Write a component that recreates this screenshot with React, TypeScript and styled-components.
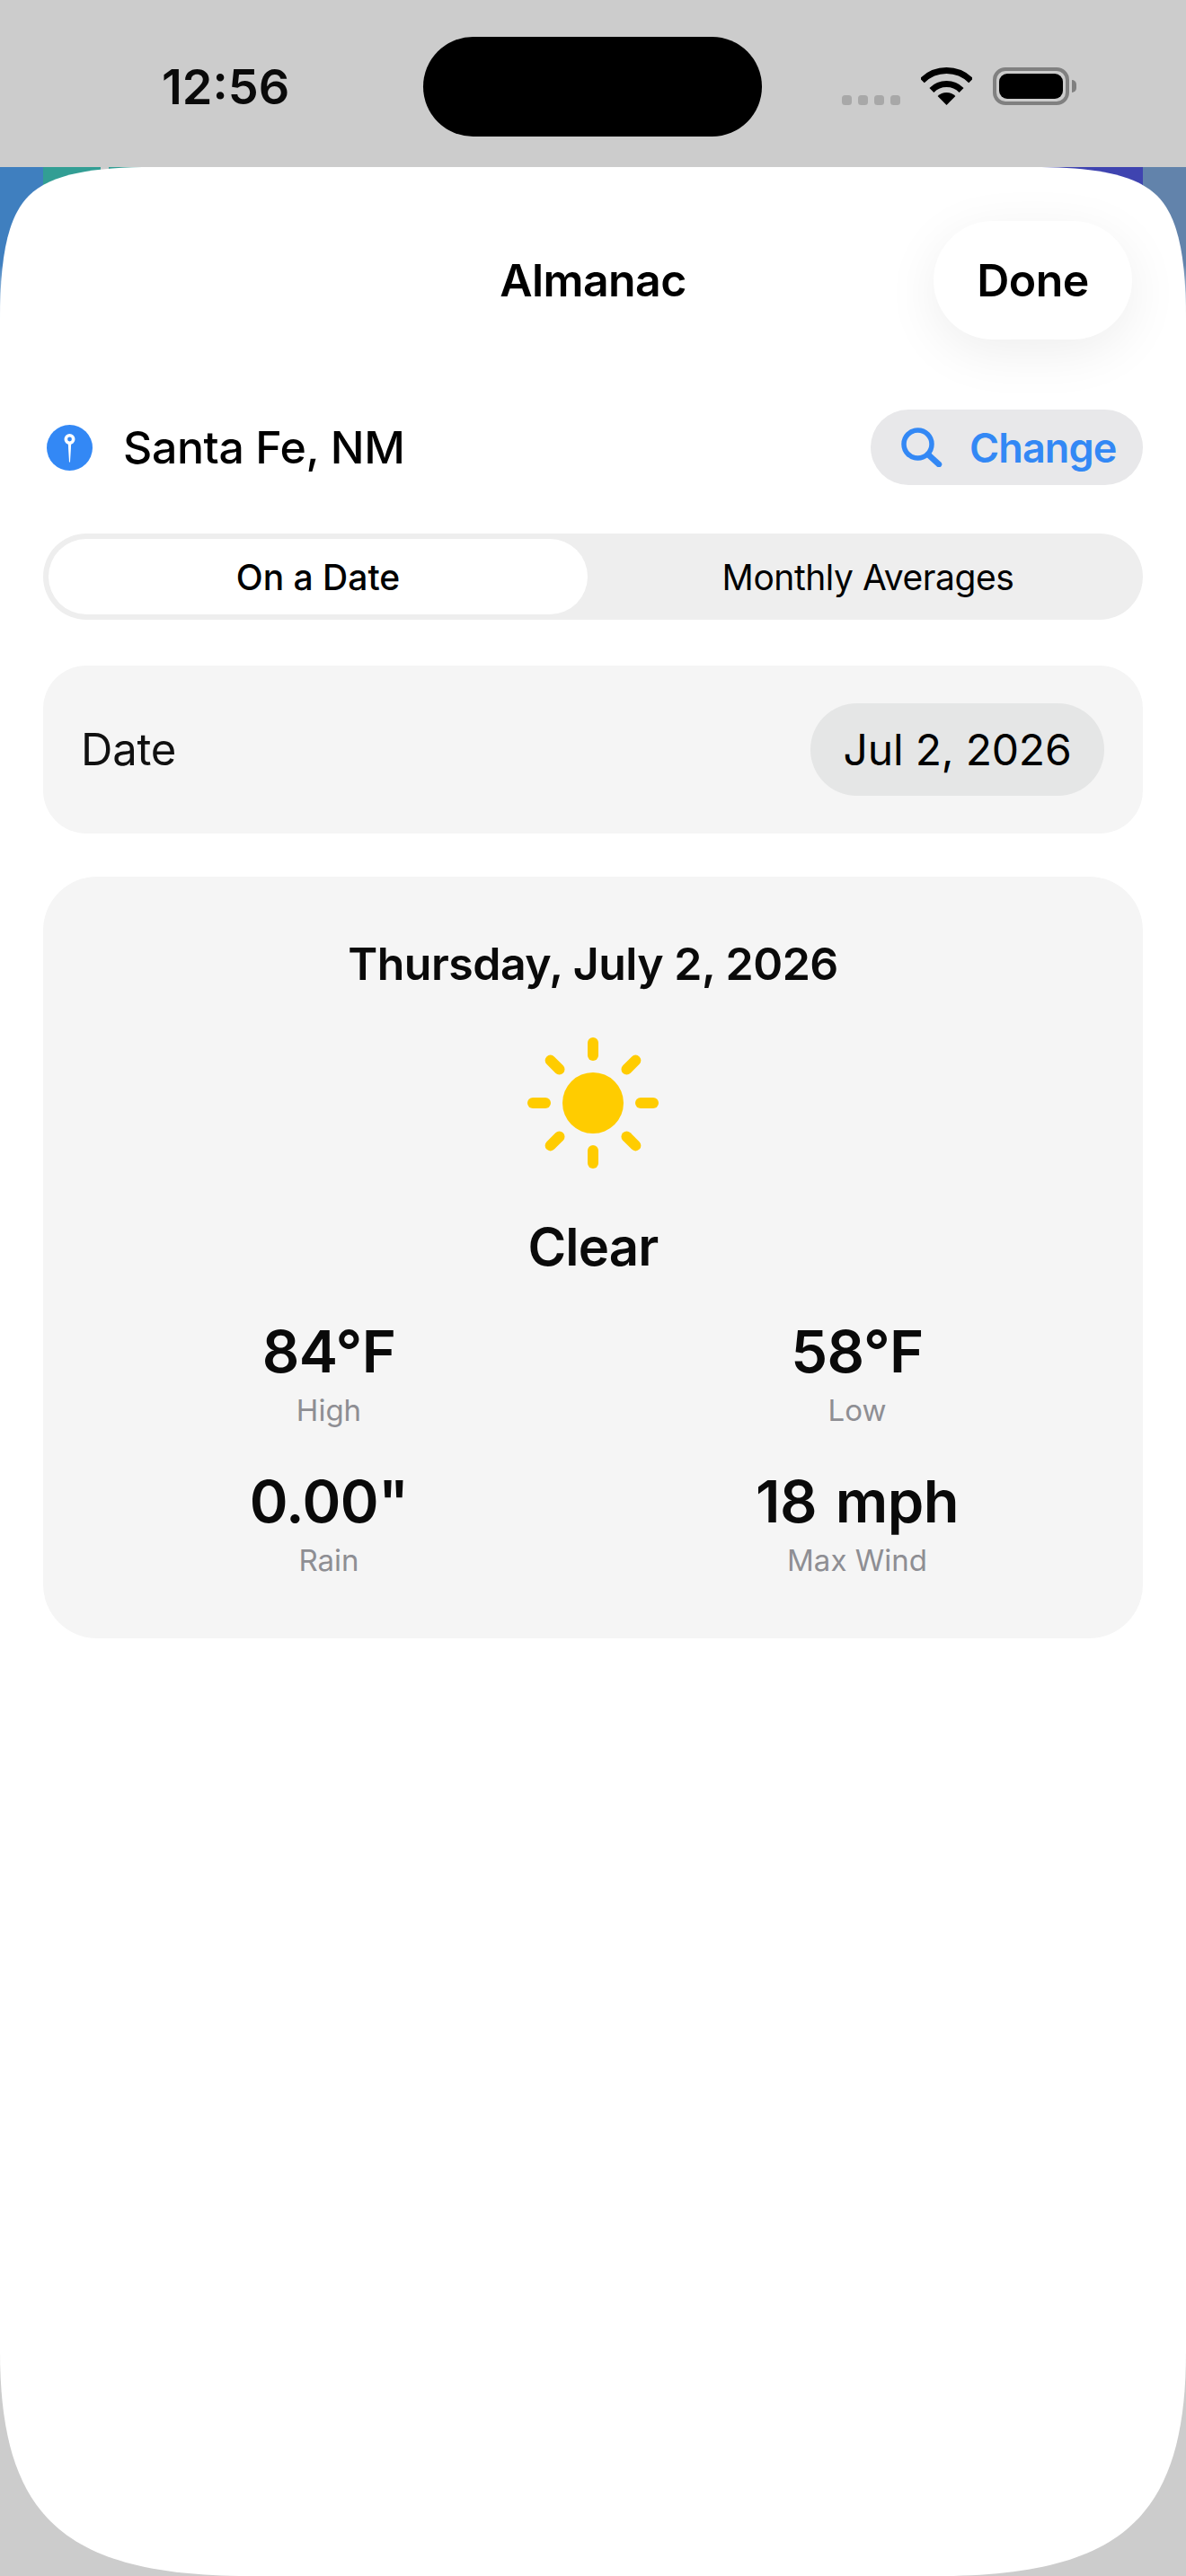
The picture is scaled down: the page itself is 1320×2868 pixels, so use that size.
import React from "react"
import styled, { createGlobalStyle } from "styled-components"

const GlobalStyle = createGlobalStyle`
html, body {
    margin: 0;
    padding: 0;
    background: #cccccc;
}
* {
    box-sizing: border-box;
}
`

const Screen = styled.div`
width: 1320px;
height: 2868px;
overflow: hidden;
display: flex;
flex-direction: column;
font-family: "Inter", "Liberation Sans", sans-serif;
color: #000;
background-color: #ccc;
background-image:
    linear-gradient(#3f7fbf 60%, #fff),
    linear-gradient(#329e94, #329e94),
    linear-gradient(#329e94, #329e94),
    linear-gradient(#3f44b0, #3f44b0),
    linear-gradient(#6283ab 60%, #fff);
background-repeat: no-repeat;
background-size: 48px 180px, 64px 60px, 60px 60px, 120px 60px, 48px 180px;
background-position: 0 186px, 48px 186px, 121px 186px, 1152px 186px, 1272px 186px;
`

const StatusBar = styled.div`
height: 186px;
flex: none;
display: grid;
grid-template-columns: 471px 377px 1fr;
padding-top: 41px;
`

const Clock = styled.div`
height: 111px;
padding-left: 180px;
display: flex;
align-items: center;
font-size: 54px;
font-weight: 600;
letter-spacing: 0;
color: #0a0a0a;
`

const Island = styled.div`
height: 111px;
background: #000;
border-radius: 56px;
`

const StatusIcons = styled.div`
display: flex;
align-items: flex-start;
padding: 34px 0 0 89px;
`

const SignalDots = styled.div`
display: flex;
gap: 7px;
margin-top: 31px;
`

const SignalDot = styled.span`
width: 11px;
height: 11px;
border-radius: 3.5px;
background: #a8a8a8;
`

const WifiIcon = styled.svg`
width: 57px;
height: 42px;
margin-left: 23px;
`

const Battery = styled.div`
position: relative;
width: 85px;
height: 42px;
margin-left: 23px;
border: 4px solid #808080;
border-radius: 14px;
padding: 3px;
&::after {
    content: "";
    position: absolute;
    right: -12px;
    top: 10px;
    width: 5px;
    height: 14px;
    border-radius: 0 5px 5px 0;
    background: #808080;
}
`

const BatteryFill = styled.div`
width: 100%;
height: 100%;
border-radius: 9px;
background: #000;
`

// continuous corners, a plain border-radius can't do these
const Sheet = styled.main`
flex: 1;
display: flex;
flex-direction: column;
padding: 60px 48px 0;
background: #fff;
clip-path: path("M0 171C0 105 7 57 32 32C57 7 105 0 171 0H1149C1215 0 1263 7 1288 32C1313 57 1320 105 1320 171V2432C1320 2620 1245 2682 1040 2682H280C75 2682 0 2620 0 2432Z");
`

const Header = styled.header`
display: grid;
grid-template-columns: 1fr auto 1fr;
align-items: center;
margin: 0 12px;
`

const Title = styled.h1`
grid-column: 2;
margin: 0;
font-size: 50px;
font-weight: 600;
letter-spacing: -0.6px;
`

const DoneButton = styled.button`
justify-self: end;
width: 221px;
height: 132px;
border: 0;
border-radius: 66px;
background: #fff;
box-shadow: 0 14px 60px rgba(0, 0, 0, 0.07);
font-family: inherit;
font-size: 50px;
font-weight: 600;
letter-spacing: -0.6px;
color: #000;
`

const LocationRow = styled.section`
display: flex;
align-items: center;
justify-content: space-between;
height: 84px;
margin-top: 78px;
`

const Place = styled.div`
display: flex;
align-items: center;
gap: 34px;
padding-left: 4px;
font-size: 50px;
font-weight: 550;
letter-spacing: -0.4px;
`

const PinBadge = styled.svg`
width: 51px;
height: 51px;
`

const ChangeButton = styled.button`
display: flex;
align-items: center;
gap: 30px;
width: 303px;
height: 84px;
padding: 0 0 0 34px;
border: 0;
border-radius: 42px;
background: #e8e8ea;
font-family: inherit;
font-size: 45px;
font-weight: 600;
letter-spacing: -0.9px;
color: #3388f5;
`

const SearchIcon = styled.svg`
width: 46px;
height: 44px;
flex: none;
`

const Segments = styled.div`
display: grid;
grid-template-columns: 1fr 1fr;
column-gap: 12px;
height: 96px;
margin-top: 54px;
padding: 6px;
border-radius: 48px;
background: #eeeeee;
`

const Segment = styled.div<{ $active?: boolean }>`
display: flex;
align-items: center;
justify-content: center;
border-radius: 42px;
font-size: 39px;
font-weight: ${(p) => (p.$active ? 500 : 400)};
letter-spacing: ${(p) => (p.$active ? "0" : "-0.45px")};
background: ${(p) => (p.$active ? "#fff" : "transparent")};
`

const DateCard = styled.section`
display: flex;
align-items: center;
justify-content: space-between;
height: 187px;
margin-top: 51px;
padding: 0 43px 0 42px;
border-radius: 48px;
background: #f5f5f5;
`

const DateLabel = styled.span`
font-size: 49px;
letter-spacing: -0.2px;
color: #111;
`

const DatePill = styled.div`
display: flex;
align-items: center;
justify-content: center;
width: 327px;
height: 103px;
border-radius: 52px;
background: #e5e6e6;
font-size: 48px;
letter-spacing: -0.2px;
color: #000;
`

const ResultCard = styled.section`
display: flex;
flex-direction: column;
align-items: center;
height: 848px;
margin-top: 48px;
padding: 68px 24px 0;
border-radius: 60px;
background: #f5f5f5;
`

const DayTitle = styled.h2`
margin: 0;
height: 58px;
line-height: 58px;
font-size: 50px;
font-weight: 600;
letter-spacing: -0.5px;
color: #0a0a0a;
`

const SunIcon = styled.svg`
width: 146px;
height: 146px;
margin-top: 53px;
`

const Condition = styled.div`
margin-top: 53px;
height: 68px;
line-height: 68px;
font-size: 58px;
font-weight: 600;
letter-spacing: -0.8px;
color: #0a0a0a;
`

const StatsGrid = styled.div`
width: 100%;
display: grid;
grid-template-columns: 1fr 1fr;
row-gap: 47px;
margin-top: 48px;
`

const Stat = styled.div`
display: flex;
flex-direction: column;
align-items: center;
`

const StatValue = styled.div`
height: 70px;
line-height: 70px;
font-size: 65px;
font-weight: 600;
letter-spacing: -0.6px;
word-spacing: 5px;
color: #0a0a0a;
`

const StatLabel = styled.div`
margin-top: 10px;
height: 40px;
line-height: 40px;
font-size: 33px;
color: #8e8e93;
`

const stats = [
    { value: "84°F", label: "High" },
    { value: "58°F", label: "Low" },
    { value: '0.00"', label: "Rain" },
    { value: "18 mph", label: "Max Wind" },
]

const rayAngles = [0, 45, 90, 135, 180, 225, 270, 315]

const App: React.FC = () => {
    return (
        <Screen>
            <GlobalStyle />
            <StatusBar>
                <Clock>12:56</Clock>
                <Island />
                <StatusIcons>
                    <SignalDots>
                        <SignalDot />
                        <SignalDot />
                        <SignalDot />
                        <SignalDot />
                    </SignalDots>
                    <WifiIcon viewBox="0 0 57 42">
                        <path d="M1.3 14.8A38.5 38.5 0 0 1 55.7 14.8" fill="none" stroke="#000" strokeWidth="7" />
                        <path d="M11.9 25.4A23.5 23.5 0 0 1 45.1 25.4" fill="none" stroke="#000" strokeWidth="7" />
                        <path d="M18.6 32.1A14 14 0 0 1 38.4 32.1L28.5 42Z" fill="#000" />
                    </WifiIcon>
                    <Battery>
                        <BatteryFill />
                    </Battery>
                </StatusIcons>
            </StatusBar>
            <Sheet>
                <Header>
                    <Title>Almanac</Title>
                    <DoneButton>Done</DoneButton>
                </Header>
                <LocationRow>
                    <Place>
                        <PinBadge viewBox="0 0 51 51">
                            <circle cx="25.5" cy="25.5" r="25.5" fill="#3388f5" />
                            <path d="M23.8 21h3.4L26 41.5h-1Z" fill="#fff" />
                            <circle cx="25.5" cy="16" r="4.2" fill="none" stroke="#fff" strokeWidth="3.6" />
                        </PinBadge>
                        Santa Fe, NM
                    </Place>
                    <ChangeButton>
                        <SearchIcon viewBox="0 0 46 44">
                            <circle cx="18.5" cy="18.5" r="15.5" fill="none" stroke="#3388f5" strokeWidth="5.5" />
                            <path d="M30 30L42 41" fill="none" stroke="#3388f5" strokeWidth="6.5" strokeLinecap="round" />
                        </SearchIcon>
                        Change
                    </ChangeButton>
                </LocationRow>
                <Segments>
                    <Segment $active>On a Date</Segment>
                    <Segment>Monthly Averages</Segment>
                </Segments>
                <DateCard>
                    <DateLabel>Date</DateLabel>
                    <DatePill>Jul 2, 2026</DatePill>
                </DateCard>
                <ResultCard>
                    <DayTitle>Thursday, July 2, 2026</DayTitle>
                    <SunIcon viewBox="0 0 146 146">
                        <circle cx="73" cy="73" r="34" fill="#ffcc00" />
                        {rayAngles.map((angle) => (
                            <path
                                key={angle}
                                d="M73 6V20"
                                stroke="#ffcc00"
                                strokeWidth="12"
                                strokeLinecap="round"
                                transform={`rotate(${angle} 73 73)`}
                            />
                        ))}
                    </SunIcon>
                    <Condition>Clear</Condition>
                    <StatsGrid>
                        {stats.map((stat) => (
                            <Stat key={stat.label}>
                                <StatValue>{stat.value}</StatValue>
                                <StatLabel>{stat.label}</StatLabel>
                            </Stat>
                        ))}
                    </StatsGrid>
                </ResultCard>
            </Sheet>
        </Screen>
    )
}

export default App
